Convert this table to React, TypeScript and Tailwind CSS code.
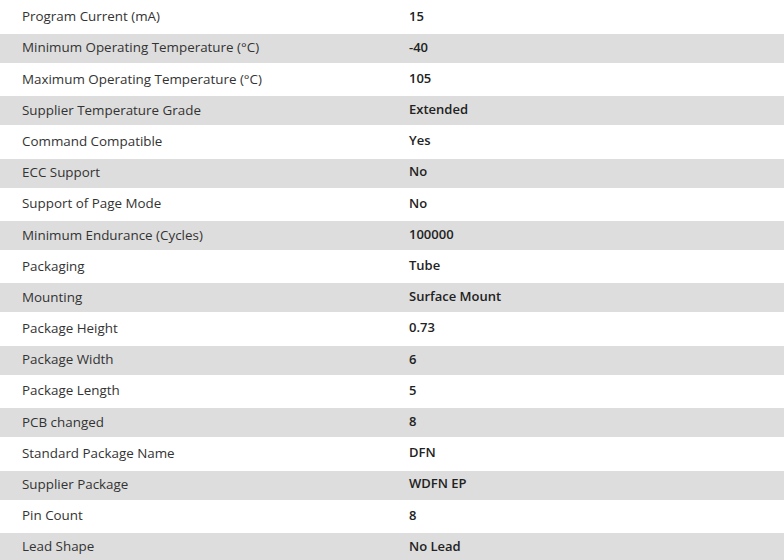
const rows: [string, string][] = [
  ["Program Current (mA)", "15"],
  ["Minimum Operating Temperature (°C)", "-40"],
  ["Maximum Operating Temperature (°C)", "105"],
  ["Supplier Temperature Grade", "Extended"],
  ["Command Compatible", "Yes"],
  ["ECC Support", "No"],
  ["Support of Page Mode", "No"],
  ["Minimum Endurance (Cycles)", "100000"],
  ["Packaging", "Tube"],
  ["Mounting", "Surface Mount"],
  ["Package Height", "0.73"],
  ["Package Width", "6"],
  ["Package Length", "5"],
  ["PCB changed", "8"],
  ["Standard Package Name", "DFN"],
  ["Supplier Package", "WDFN EP"],
  ["Pin Count", "8"],
  ["Lead Shape", "No Lead"],
];

export default function App() {
  return (
    <div
      className="w-[784px] h-[560px] overflow-hidden bg-white flex flex-col gap-[2.19px] pt-[2.81px] text-[13.4px] text-[#333333]"
      style={{ fontFamily: '"Open Sans", "Noto Sans", sans-serif' }}
    >
      {rows.map(([k, v], i) => (
        <div
          key={k}
          className={`flex items-center h-[29px] pb-[2px] shrink-0 ${i % 2 === 1 ? "bg-[#dddddd]" : "bg-white"}`}
        >
          <div className="w-[409px] pl-[22px] shrink-0">{k}</div>
          <div className="font-semibold text-[#222222] text-[13px]">{v}</div>
        </div>
      ))}
    </div>
  );
}
